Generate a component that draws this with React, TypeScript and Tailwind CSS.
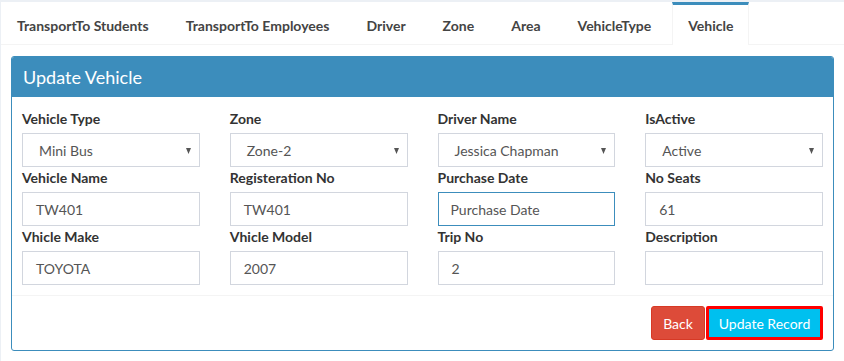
import React from "react";

const tabs = [
  "TransportTo Students",
  "TransportTo Employees",
  "Driver",
  "Zone",
  "Area",
  "VehicleType",
  "Vehicle",
];

type Field = { label: string; value: string; kind: "select" | "input" | "focus" | "empty" };

const fields: Field[] = [
  { label: "Vehicle Type", value: "Mini Bus", kind: "select" },
  { label: "Zone", value: "Zone-2", kind: "select" },
  { label: "Driver Name", value: "Jessica Chapman", kind: "select" },
  { label: "IsActive", value: "Active", kind: "select" },
  { label: "Vehicle Name", value: "TW401", kind: "input" },
  { label: "Registeration No", value: "TW401", kind: "input" },
  { label: "Purchase Date", value: "Purchase Date", kind: "focus" },
  { label: "No Seats", value: "61", kind: "input" },
  { label: "Vhicle Make", value: "TOYOTA", kind: "input" },
  { label: "Vhicle Model", value: "2007", kind: "input" },
  { label: "Trip No", value: "2", kind: "input" },
  { label: "Description", value: "", kind: "empty" },
];

function Arrow() {
  return (
    <svg width="5" height="6" viewBox="0 0 5 6" className="shrink-0 mt-px">
      <path d="M0 0 L5 0 L2.5 6 Z" fill="#555" />
    </svg>
  );
}

function Control({ f }: { f: Field }) {
  if (f.kind === "select") {
    return (
      <div className="h-[34px] border border-[#d2d6de] flex items-center pl-[16px] pr-[8px] text-[14px] text-[#555]">
        <span className="flex-1">{f.value}</span>
        <Arrow />
      </div>
    );
  }
  return (
    <div
      className={
        f.kind === "focus"
          ? "h-[34px] border border-[#3c8dbc] flex items-center pl-[12px] text-[14px] text-[#555]"
          : "h-[34px] border border-[#d2d6de] flex items-center pl-[13px] text-[14px] text-[#555]"
      }
    >
      {f.value}
    </div>
  );
}

export default function App() {
  return (
    <div className="w-[844px] h-[361px] bg-[#ecf0f5] pl-px pt-[2px] font-['Lato',sans-serif] overflow-hidden">
      <div className="bg-white h-full">
        <div className="flex h-[43px] border-b border-[#f4f4f4]">
          {tabs.map((t) => {
            const active = t === "Vehicle";
            return (
              <div
                key={t}
                className={
                  active
                    ? "mr-[5px] px-[15px] border-t-[3px] border-t-[#3c8dbc] border-x border-x-[#f4f4f4] -mb-px bg-white flex items-center text-[14px] font-bold text-[#444] pt-[1px]"
                    : "mr-[5px] px-[16px] border-t-[3px] border-t-transparent flex items-center text-[14px] font-bold text-[#444] pt-[1px]"
                }
              >
                {t}
              </div>
            );
          })}
        </div>
        <div className="px-[10px] pt-[11px]">
          <div className="border border-[#3c8dbc] rounded-[3px] overflow-hidden">
            <div className="bg-[#3c8dbc] h-[40px] flex items-center px-[11px] text-[18px] text-white">
              Update Vehicle
            </div>
            <div className="pt-[11px] pb-[10px] px-[10px] grid grid-cols-4 gap-x-[30px]">
              {fields.map((f) => (
                <div key={f.label}>
                  <div className="h-[20px] mb-[5px] flex items-center text-[14px] font-bold text-[#333]">
                    {f.label}
                  </div>
                  <Control f={f} />
                </div>
              ))}
            </div>
            <div className="border-t border-[#f4f4f4] pt-[10px] pb-[10px] px-[10px] flex justify-end">
              <div className="w-[54px] h-[34px] bg-[#dd4b39] border border-[#d73925] rounded-[3px] flex items-center justify-center text-[14px] text-white">
                Back
              </div>
              <div className="ml-px w-[117px] h-[34px] bg-[#00c0ef] border-[3px] border-[#ff0000] rounded-[2px] flex items-center justify-center text-[14px] text-white">
                Update Record
              </div>
            </div>
          </div>
        </div>
      </div>
    </div>
  );
}
